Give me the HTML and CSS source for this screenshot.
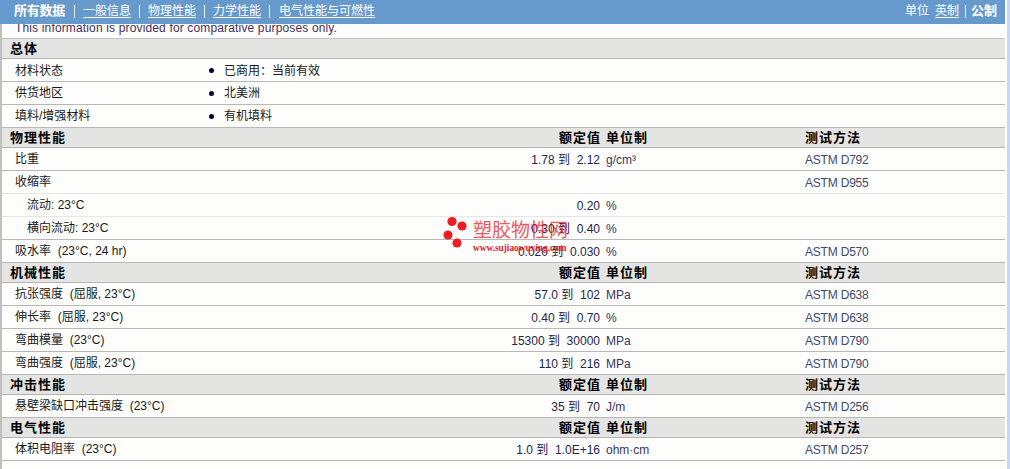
FILE: index.html
```html
<!DOCTYPE html>
<html lang="zh">
<head>
<meta charset="utf-8">
<title>所有数据</title>
<link rel="stylesheet" href="styles.css">
</head>
<body>
<div class="page">
  <div class="panel">
    <nav class="nav">
      <div class="nav-links">
        <b>所有数据</b><i class="sep"></i><a>一般信息</a><i class="sep"></i><a>物理性能</a><i class="sep"></i><a>力学性能</a><i class="sep last"></i><a>电气性能与可燃性</a>
      </div>
      <div class="nav-units">
        <span>单位</span><a>英制</a><i class="sep small"></i><b>公制</b>
      </div>
    </nav>
    <div class="notice">This information is provided for comparative purposes only.</div>

    <div class="sec"><span>总体</span></div>
    <div class="row info"><span class="name">材料状态</span><span class="dot"></span><span>已商用<span class="colon">：</span>当前有效</span></div>
    <div class="row info"><span class="name">供货地区</span><span class="dot"></span><span>北美洲</span></div>
    <div class="row info"><span class="name">填料/增强材料</span><span class="dot"></span><span>有机填料</span></div>

    <div class="sec data"><span class="name">物理性能</span><span class="val">额定值</span><span class="unit">单位制</span><span class="test">测试方法</span></div>
    <div class="row data"><span class="name">比重</span><span class="val">1.78 到&nbsp; 2.12</span><span class="unit">g/cm³</span><span class="test">ASTM D792</span></div>
    <div class="row data light"><span class="name">收缩率</span><span class="val"></span><span class="unit"></span><span class="test">ASTM D955</span></div>
    <div class="row data sub light"><span class="name">流动: 23°C</span><span class="val">0.20</span><span class="unit">%</span><span class="test"></span></div>
    <div class="row data sub"><span class="name">横向流动: 23°C</span><span class="val">0.30 到&nbsp; 0.40</span><span class="unit">%</span><span class="test"></span></div>
    <div class="row data"><span class="name">吸水率&nbsp; (23°C, 24 hr)</span><span class="val">0.020 到&nbsp; 0.030</span><span class="unit">%</span><span class="test">ASTM D570</span></div>

    <div class="sec data"><span class="name">机械性能</span><span class="val">额定值</span><span class="unit">单位制</span><span class="test">测试方法</span></div>
    <div class="row data"><span class="name">抗张强度&nbsp; (屈服, 23°C)</span><span class="val">57.0 到&nbsp; 102</span><span class="unit">MPa</span><span class="test">ASTM D638</span></div>
    <div class="row data"><span class="name">伸长率&nbsp; (屈服, 23°C)</span><span class="val">0.40 到&nbsp; 0.70</span><span class="unit">%</span><span class="test">ASTM D638</span></div>
    <div class="row data"><span class="name">弯曲模量&nbsp; (23°C)</span><span class="val">15300 到&nbsp; 30000</span><span class="unit">MPa</span><span class="test">ASTM D790</span></div>
    <div class="row data"><span class="name">弯曲强度&nbsp; (屈服, 23°C)</span><span class="val">110 到&nbsp; 216</span><span class="unit">MPa</span><span class="test">ASTM D790</span></div>

    <div class="sec data"><span class="name">冲击性能</span><span class="val">额定值</span><span class="unit">单位制</span><span class="test">测试方法</span></div>
    <div class="row data"><span class="name">悬壁梁缺口冲击强度&nbsp; (23°C)</span><span class="val">35 到&nbsp; 70</span><span class="unit">J/m</span><span class="test">ASTM D256</span></div>

    <div class="sec data"><span class="name">电气性能</span><span class="val">额定值</span><span class="unit">单位制</span><span class="test">测试方法</span></div>
    <div class="row data"><span class="name">体积电阻率&nbsp; (23°C)</span><span class="val">1.0 到&nbsp; 1.0E+16</span><span class="unit">ohm·cm</span><span class="test">ASTM D257</span></div>
  </div>

  <div class="mark">
    <svg class="mark-dots" width="28" height="36" viewBox="0 0 28 36"><circle cx="10" cy="5.500" r="4.600"/><circle cx="20" cy="10" r="4.600"/><circle cx="6" cy="19" r="4.600"/><circle cx="15" cy="27" r="4.600"/></svg>
    <div class="mark-text">
      <div class="mark-cn">塑胶物性网</div>
      <div class="mark-url">www.sujiaowuxing.com</div>
    </div>
  </div>
</div>
</body>
</html>
```

FILE: styles.css
```css
* { box-sizing: border-box; }
html, body { margin: 0; padding: 0; height: 100%; overflow: hidden; }
body {
  background: #ffffff;
  color: #1a1a1a;
  font: 12px/16px "Liberation Sans", "Noto Sans CJK SC", sans-serif;
}
.page {
  position: relative;
  width: 1010px;
  height: 469px;
  background: linear-gradient(to right, #fdfefb 1005px, #ffffff 1005px, #ffffff 1007px, #c9d8f2 1007px);
}
.panel {
  width: 1005px;
  height: 469px;
  border-left: 2px solid #c0c0c0;
  background: #fdfefb;
}
.nav {
  height: 24px;
  margin-left: -2px;
  padding: 3px 8px 0 14px;
  display: flex;
  justify-content: space-between;
  background: #6699cc;
  color: #ffffff;
}
.nav a { text-decoration: underline; text-underline-offset: 2px; }
.nav b { font-size: 13px; }
.nav-links b { letter-spacing: -0.250px; }
.nav-links, .nav-units { display: flex; align-items: center; height: 16px; }
.sep { width: 1px; height: 13px; margin: 0 8px; background: #e8eef6; }
.nav-links b + .sep { margin: 0 8px 0 9px; }
.sep.last { margin: 0 9px 0 8px; }
.nav-units a { margin-left: 6px; }
.sep.small { margin: 0 5px 0 6px; }
.notice {
  height: 15px;
  padding-left: 13px;
  line-height: 8px;
  letter-spacing: 0.150px;
  color: #45305c;
  overflow: hidden;
  border-bottom: 1px solid #c4c4c4;
}
.sec {
  height: 20px;
  padding-left: 8px;
  background-color: #e4e4e2;
  background-image:
    radial-gradient(circle, #e9e8ec 1px, transparent 1px);
  background-size: 8px 7px;
  background-position: 0 1px;
  border-bottom: 1px solid #b4b4b4;
  color: #000000;
  font-weight: bold;
  font-size: 13px;
  line-height: 19px;
  letter-spacing: 1px;
}
.row {
  height: 23px;
  padding-left: 13px;
  border-bottom: 1px solid #b8b8b8;
  line-height: 22px;
}
.row.light { border-bottom-color: #e6e6e6; }
.row.info { display: grid; grid-template-columns: 194px 15px 1fr; align-items: center; }
.colon { font-family: "Noto Sans CJK TC", sans-serif; }
.row.data { display: grid; grid-template-columns: 435px 150px 205px 1fr; }
.sec.data { display: grid; grid-template-columns: 440px 150px 205px 1fr; }
.row.data .val, .row.data .unit, .row.data .test { padding-top: 1px; }
.val { text-align: right; color: #25254a; }
.sec .val { color: #000; margin-right: -1px; }
.unit { padding-left: 6px; color: #353560; }
.test { color: #3e4a70; }
.row .test { letter-spacing: -0.200px; }
.sec .unit, .sec .test { color: #000; }
.sub .name { padding-left: 12px; }
.dot { width: 5px; height: 5px; border-radius: 50%; background: #000033; justify-self: start; }
.mark {
  position: absolute;
  left: 442px;
  top: 216px;
  display: flex;
  color: #e8202a;
  pointer-events: none;
}
.mark-dots { fill: #ee1c25; display: block; }
.mark-text { margin-left: 3px; padding-top: 3px; }
.mark-cn { font-size: 19px; line-height: 23px; opacity: .75; }
.mark-url { font: bold 9.300px/10px "Liberation Serif", serif; margin-top: 1px; }
```
